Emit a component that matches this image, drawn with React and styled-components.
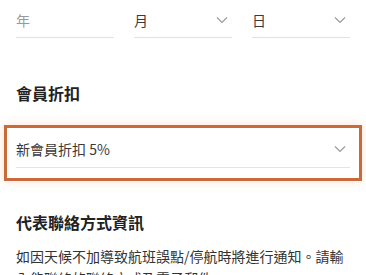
import React from "react";
import styled, { createGlobalStyle } from "styled-components";

const GlobalStyle = createGlobalStyle`
  body {
    margin: 0;
    background: #fff;
    font-family: "Noto Sans CJK TC", "Noto Sans", sans-serif;
    color: #222;
  }
`;

const Page = styled.div`
  padding: 0 16px;
`;

const DateRow = styled.div`
  display: grid;
  grid-template-columns: repeat(3, 1fr);
  gap: 20px;
`;

const SelectField = styled.div`
  display: flex;
  align-items: center;
  justify-content: space-between;
  padding: ${(p) => (p.$boxed ? "11px 0 8px" : "10px 0 7px")};
  border-bottom: 1px solid ${(p) => (p.$boxed ? "#e1e4ea" : "#e2e2e2")};
  font-size: 14px;
  line-height: 20px;
  color: ${(p) => (p.$placeholder ? "#9a9a9a" : "#3a3a3a")};
`;

const Chevron = styled.svg`
  width: 12px;
  height: 8px;
  margin-right: 4px;
  flex: none;
`;

const SectionTitle = styled.h3`
  margin: ${(p) => p.$top}px 0 0;
  font-size: 16px;
  line-height: 24px;
  font-weight: 700;
  color: #222;
`;

const HighlightBox = styled.div`
  margin: 20px -12px 0;
  border: 3px solid #c96a3b;
  padding: 0 9px 10px;
  box-shadow: 0 0 10px rgba(240, 170, 120, 0.35);
`;

const BodyText = styled.p`
  margin: 11px 0 0;
  font-size: 14px;
  line-height: 22px;
  color: #333;
`;

function Arrow() {
  return (
    <Chevron viewBox="0 0 12 8">
      <path d="M1 1.5 L6 6.5 L11 1.5" fill="none" stroke="#9a9a9a" strokeWidth="1.2" />
    </Chevron>
  );
}

export default function App() {
  return (
    <>
      <GlobalStyle />
      <Page>
        <DateRow>
          <SelectField $placeholder>
            <span>年</span>
          </SelectField>
          <SelectField>
            <span>月</span>
            <Arrow />
          </SelectField>
          <SelectField>
            <span>日</span>
            <Arrow />
          </SelectField>
        </DateRow>

        <SectionTitle $top={43}>會員折扣</SectionTitle>
        <HighlightBox>
          <SelectField $boxed>
            <span>新會員折扣 5%</span>
            <Arrow />
          </SelectField>
        </HighlightBox>

        <SectionTitle $top={29}>代表聯絡方式資訊</SectionTitle>
        <BodyText>
          如因天候不加導致航班誤點/停航時將進行通知。請輸入能聯絡的聯絡方式及電子郵件。
        </BodyText>
      </Page>
    </>
  );
}
